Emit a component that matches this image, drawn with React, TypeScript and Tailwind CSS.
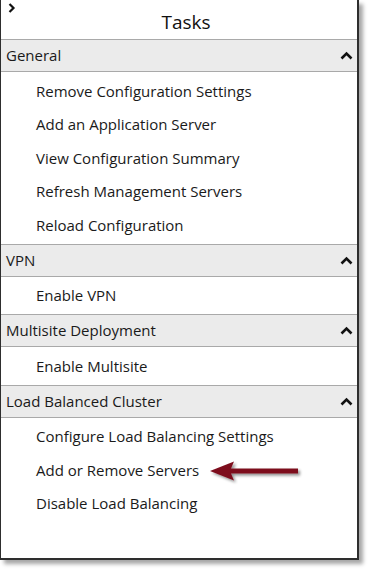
import React from 'react';

const sections = [
  {
    title: 'General',
    items: [
      'Remove Configuration Settings',
      'Add an Application Server',
      'View Configuration Summary',
      'Refresh Management Servers',
      'Reload Configuration',
    ],
  },
  { title: 'VPN', items: ['Enable VPN'] },
  { title: 'Multisite Deployment', items: ['Enable Multisite'] },
  {
    title: 'Load Balanced Cluster',
    items: ['Configure Load Balancing Settings', 'Add or Remove Servers', 'Disable Load Balancing'],
  },
];

function ChevronUp() {
  return (
    <svg width="13" height="9" viewBox="0 0 13 9" className="mr-[4px]">
      <path d="M1.5 7.5 L6.5 2.5 L11.5 7.5" fill="none" stroke="#111" strokeWidth="2.6" />
    </svg>
  );
}

// red pointer next to the highlighted task
function Arrow() {
  return (
    <svg width="96" height="26" viewBox="0 0 96 26" className="absolute left-[206px] top-[7px]">
      <defs>
        <filter id="sh" x="-20%" y="-50%" width="140%" height="200%">
          <feGaussianBlur in="SourceAlpha" stdDeviation="1.5" />
          <feOffset dx="2" dy="2" />
          <feComponentTransfer>
            <feFuncA type="linear" slope="0.45" />
          </feComponentTransfer>
          <feMerge>
            <feMergeNode />
            <feMergeNode in="SourceGraphic" />
          </feMerge>
        </filter>
      </defs>
      <path d="M3 11 L27 1.5 L24 8.5 L91 8.5 L91 13.5 L24 13.5 L27 20.5 Z" fill="#7d0f1e" filter="url(#sh)" />
    </svg>
  );
}

export default function App() {
  return (
    <div className="w-[369px] h-[571px] bg-white font-['Open_Sans',sans-serif] text-[#1a1a1a]">
      <div className="w-[359px] h-[560px] bg-white border-l border-r-2 border-b-2 border-[#2e2e2e] shadow-[4px_4px_4px_rgba(0,0,0,0.35)] flex flex-col">
        <div className="h-[39px] shrink-0 relative flex items-center justify-center">
          <svg width="8" height="10" viewBox="0 0 8 10" className="absolute left-[7px] top-[3px]">
            <path d="M1.5 1 L5.5 5 L1.5 9" fill="none" stroke="#111" strokeWidth="2.2" />
          </svg>
          <span className="text-[19px] mt-[5px] ml-[14px] text-[#111]">Tasks</span>
        </div>
        {sections.map((s) => (
          <div key={s.title} className="shrink-0">
            <div className="h-[33px] bg-[#ebebeb] border-y border-[#a9a9a9] flex items-center justify-between pl-[5px]">
              <span className="text-[15px]">{s.title}</span>
              <ChevronUp />
            </div>
            <div className="py-[2px]">
              {s.items.map((it) => (
                <div key={it} className="h-[33.5px] flex items-center pl-[35px] text-[15px] relative">
                  <span>{it}</span>
                  {it === 'Add or Remove Servers' && <Arrow />}
                </div>
              ))}
            </div>
          </div>
        ))}
      </div>
    </div>
  );
}
